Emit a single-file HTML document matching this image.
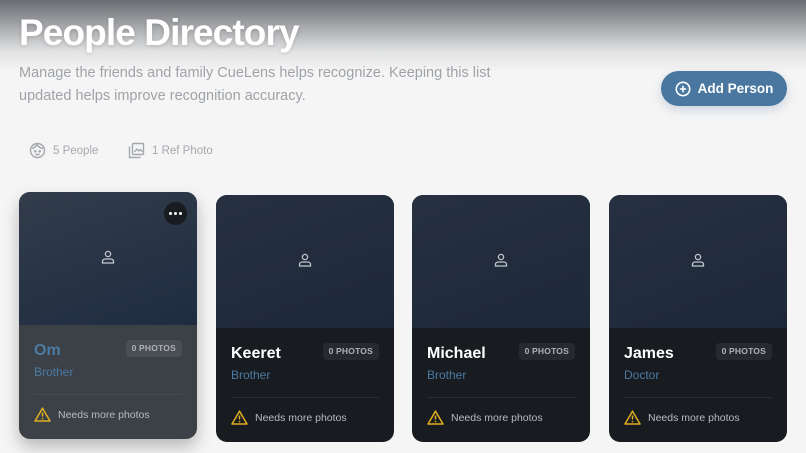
<!DOCTYPE html>
<html><head><style>
*{margin:0;padding:0;box-sizing:border-box}
body{width:806px;height:453px;overflow:hidden;font-family:"Liberation Sans",sans-serif;background:linear-gradient(180deg,#686b70 0px,#a3a5a8 25px,#e2e3e4 52px,#f5f5f5 72px,#f5f5f5 100%);position:relative}
h1{position:absolute;left:19px;top:12px;font-size:37px;font-weight:bold;color:#fff;letter-spacing:-0.9px;text-shadow:0 1px 4px rgba(0,0,0,.15)}
.sub{position:absolute;left:19px;top:62px;width:500px;font-size:14.5px;line-height:23px;color:#9ea3a9}
.btn{position:absolute;left:661px;top:71px;width:126px;height:35px;border-radius:18px;background:#4a77a0;color:#fff;font-weight:bold;font-size:13.5px;display:flex;align-items:center;justify-content:center;gap:7px;box-shadow:0 4px 10px rgba(74,119,160,.25)}
.stat{position:absolute;top:142px;font-size:11.5px;color:#a4a8ad;display:flex;align-items:center;gap:7px}
.card{position:absolute;width:178px;height:247px;border-radius:11px;overflow:hidden;background:#181b1f}
.img{height:133px;background:linear-gradient(160deg,#263040,#1d2838);position:relative}
.img svg{position:absolute;left:82px;top:58px}
.name{position:absolute;left:15px;top:150px;font-size:16px;font-weight:bold;color:#fff}
.role{position:absolute;left:15px;top:173px;font-size:12px;color:#4b7ba3}
.pill{position:absolute;right:15px;top:148px;height:17px;padding:0 6px;border-radius:4px;background:#262a30;color:#aeb2b7;font-size:8.5px;font-weight:bold;line-height:17px;letter-spacing:.2px}
.div{position:absolute;left:15px;right:15px;top:202px;height:1px;background:#2a2e34}
.warn{position:absolute;left:15px;top:215px;display:flex;align-items:center;gap:7px;font-size:10.5px;color:#b8bcc1}
.dots{position:absolute;right:10px;top:10px;width:23px;height:23px;border-radius:50%;background:#181b1f;display:flex;align-items:center;justify-content:center;gap:2px}
.dots i{width:3px;height:3px;border-radius:50%;background:#fff}
</style></head><body>
<h1>People Directory</h1>
<div class="sub">Manage the friends and family CueLens helps recognize. Keeping this list updated helps improve recognition accuracy.</div>
<div class="btn"><svg width="16" height="16" viewBox="0 0 16 16"><circle cx="8" cy="8" r="6.7" fill="none" stroke="#fff" stroke-width="1.6"/><path d="M8 4.8v6.4M4.8 8h6.4" stroke="#fff" stroke-width="1.6"/></svg>Add Person</div>
<div class="stat" style="left:29px"><svg width="17" height="17" viewBox="0 0 17 17" fill="none" stroke="#a4a8ad" stroke-width="1.4"><circle cx="8.5" cy="8.5" r="7"/><path d="M3 6.5c2-0.5 4-2 5-4 1 2 3 3.5 6 4"/><circle cx="6.3" cy="9.3" r=".6" fill="#a4a8ad"/><circle cx="10.7" cy="9.3" r=".6" fill="#a4a8ad"/><path d="M6.5 12c1.2.8 2.8.8 4 0"/></svg>5 People</div>
<div class="stat" style="left:128px"><svg width="17" height="17" viewBox="0 0 17 17" fill="none" stroke="#a4a8ad" stroke-width="1.4"><rect x="4.5" y="1.5" width="11" height="11" rx="1"/><path d="M1.5 4.5v11h11"/><path d="M6.5 10l2.5-3 2 2 1.5-1.5 2 2.5"/></svg>1 Ref Photo</div>

<div class="card" style="left:19px;top:192px;background:#3c4047;box-shadow:0 8px 16px rgba(0,0,0,.25)">
<div class="img" style="background:linear-gradient(160deg,#323c4b,#1f2c40)"><svg width="14" height="14" viewBox="0 0 14 14" fill="none" stroke="#c3c8ce" stroke-width="1.3"><circle cx="7" cy="4" r="2.6"/><path d="M1.5 13v-1.5c0-1.5 1.2-2.5 2.7-2.5h5.6c1.5 0 2.7 1 2.7 2.5V13z"/></svg>
<div class="dots"><i></i><i></i><i></i></div></div>
<div class="name" style="color:#4b7ba3">Om</div><div class="role">Brother</div><div class="pill" style="background:#4a4e55">0 PHOTOS</div><div class="div" style="background:#474b52"></div>
<div class="warn"><svg width="17" height="15" viewBox="0 0 17 15"><path d="M8.5 1.2L16 14H1z" fill="none" stroke="#e0b020" stroke-width="1.5" stroke-linejoin="round"/><path d="M8.5 5.5v4" stroke="#e0b020" stroke-width="1.5"/><circle cx="8.5" cy="11.6" r=".8" fill="#e0b020"/></svg>Needs more photos</div></div>

<div class="card" style="left:216px;top:195px"><div class="img"><svg width="14" height="14" viewBox="0 0 14 14" fill="none" stroke="#c3c8ce" stroke-width="1.3"><circle cx="7" cy="4" r="2.6"/><path d="M1.5 13v-1.5c0-1.5 1.2-2.5 2.7-2.5h5.6c1.5 0 2.7 1 2.7 2.5V13z"/></svg></div>
<div class="name">Keeret</div><div class="role">Brother</div><div class="pill">0 PHOTOS</div><div class="div"></div>
<div class="warn"><svg width="17" height="15" viewBox="0 0 17 15"><path d="M8.5 1.2L16 14H1z" fill="none" stroke="#e0b020" stroke-width="1.5" stroke-linejoin="round"/><path d="M8.5 5.5v4" stroke="#e0b020" stroke-width="1.5"/><circle cx="8.5" cy="11.6" r=".8" fill="#e0b020"/></svg>Needs more photos</div></div>

<div class="card" style="left:412px;top:195px"><div class="img"><svg width="14" height="14" viewBox="0 0 14 14" fill="none" stroke="#c3c8ce" stroke-width="1.3"><circle cx="7" cy="4" r="2.6"/><path d="M1.5 13v-1.5c0-1.5 1.2-2.5 2.7-2.5h5.6c1.5 0 2.7 1 2.7 2.5V13z"/></svg></div>
<div class="name">Michael</div><div class="role">Brother</div><div class="pill">0 PHOTOS</div><div class="div"></div>
<div class="warn"><svg width="17" height="15" viewBox="0 0 17 15"><path d="M8.5 1.2L16 14H1z" fill="none" stroke="#e0b020" stroke-width="1.5" stroke-linejoin="round"/><path d="M8.5 5.5v4" stroke="#e0b020" stroke-width="1.5"/><circle cx="8.5" cy="11.6" r=".8" fill="#e0b020"/></svg>Needs more photos</div></div>

<div class="card" style="left:609px;top:195px"><div class="img"><svg width="14" height="14" viewBox="0 0 14 14" fill="none" stroke="#c3c8ce" stroke-width="1.3"><circle cx="7" cy="4" r="2.6"/><path d="M1.5 13v-1.5c0-1.5 1.2-2.5 2.7-2.5h5.6c1.5 0 2.7 1 2.7 2.5V13z"/></svg></div>
<div class="name">James</div><div class="role">Doctor</div><div class="pill">0 PHOTOS</div><div class="div"></div>
<div class="warn"><svg width="17" height="15" viewBox="0 0 17 15"><path d="M8.5 1.2L16 14H1z" fill="none" stroke="#e0b020" stroke-width="1.5" stroke-linejoin="round"/><path d="M8.5 5.5v4" stroke="#e0b020" stroke-width="1.5"/><circle cx="8.5" cy="11.6" r=".8" fill="#e0b020"/></svg>Needs more photos</div></div>
</body></html>
